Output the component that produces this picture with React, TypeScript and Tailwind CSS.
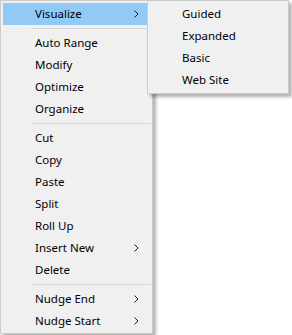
import React from "react";

type Item = { label: string; sub?: boolean; active?: boolean } | "sep";

const mainItems: Item[] = [
  { label: "Visualize", sub: true, active: true },
  "sep",
  { label: "Auto Range" },
  { label: "Modify" },
  { label: "Optimize" },
  { label: "Organize" },
  "sep",
  { label: "Cut" },
  { label: "Copy" },
  { label: "Paste" },
  { label: "Split" },
  { label: "Roll Up" },
  { label: "Insert New", sub: true },
  { label: "Delete" },
  "sep",
  { label: "Nudge End", sub: true },
  { label: "Nudge Start", sub: true },
];

const subItems = ["Guided", "Expanded", "Basic", "Web Site"];

function Chevron() {
  return (
    <svg width="5" height="8" viewBox="0 0 5 8" className="ml-auto mr-[11px]">
      <polyline points="0.5,0.5 4,4 0.5,7.5" fill="none" stroke="#1a1a1a" strokeWidth="1" />
    </svg>
  );
}

export default function App() {
  return (
    <div
      className="relative w-[292px] h-[335px] bg-white overflow-hidden text-[11.5px] text-black"
      style={{ fontFamily: '"Noto Sans", "Open Sans", sans-serif' }}
    >
      <div className="w-[153px] h-[334px] bg-[#f0f0f0] border border-[#cccccc] pt-[2px] pb-[1px] shadow-[3px_3px_3px_rgba(0,0,0,0.3)] flex flex-col">
        {mainItems.map((it, i) =>
          it === "sep" ? (
            <div key={i} className="h-[7px] pt-[3px] pl-[30px] pr-[1px]">
              <div className="h-px bg-[#d7d7d7]" />
            </div>
          ) : (
            <div
              key={i}
              className={
                "h-[22px] mx-[2px] flex items-center pl-[32px] " +
                (it.active ? "bg-[#91c9f7]" : "")
              }
            >
              <span className="leading-none">{it.label}</span>
              {it.sub ? <Chevron /> : null}
            </div>
          )
        )}
      </div>

      <div className="absolute left-[147px] top-0 w-[142px] h-[94px] bg-[#f0f0f0] border border-[#cccccc] pt-[2px] shadow-[3px_3px_3px_rgba(0,0,0,0.3)] flex flex-col">
        {subItems.map((s) => (
          <div key={s} className="h-[22px] mx-[2px] flex items-center pl-[32px]">
            <span className="leading-none">{s}</span>
          </div>
        ))}
      </div>
    </div>
  );
}
